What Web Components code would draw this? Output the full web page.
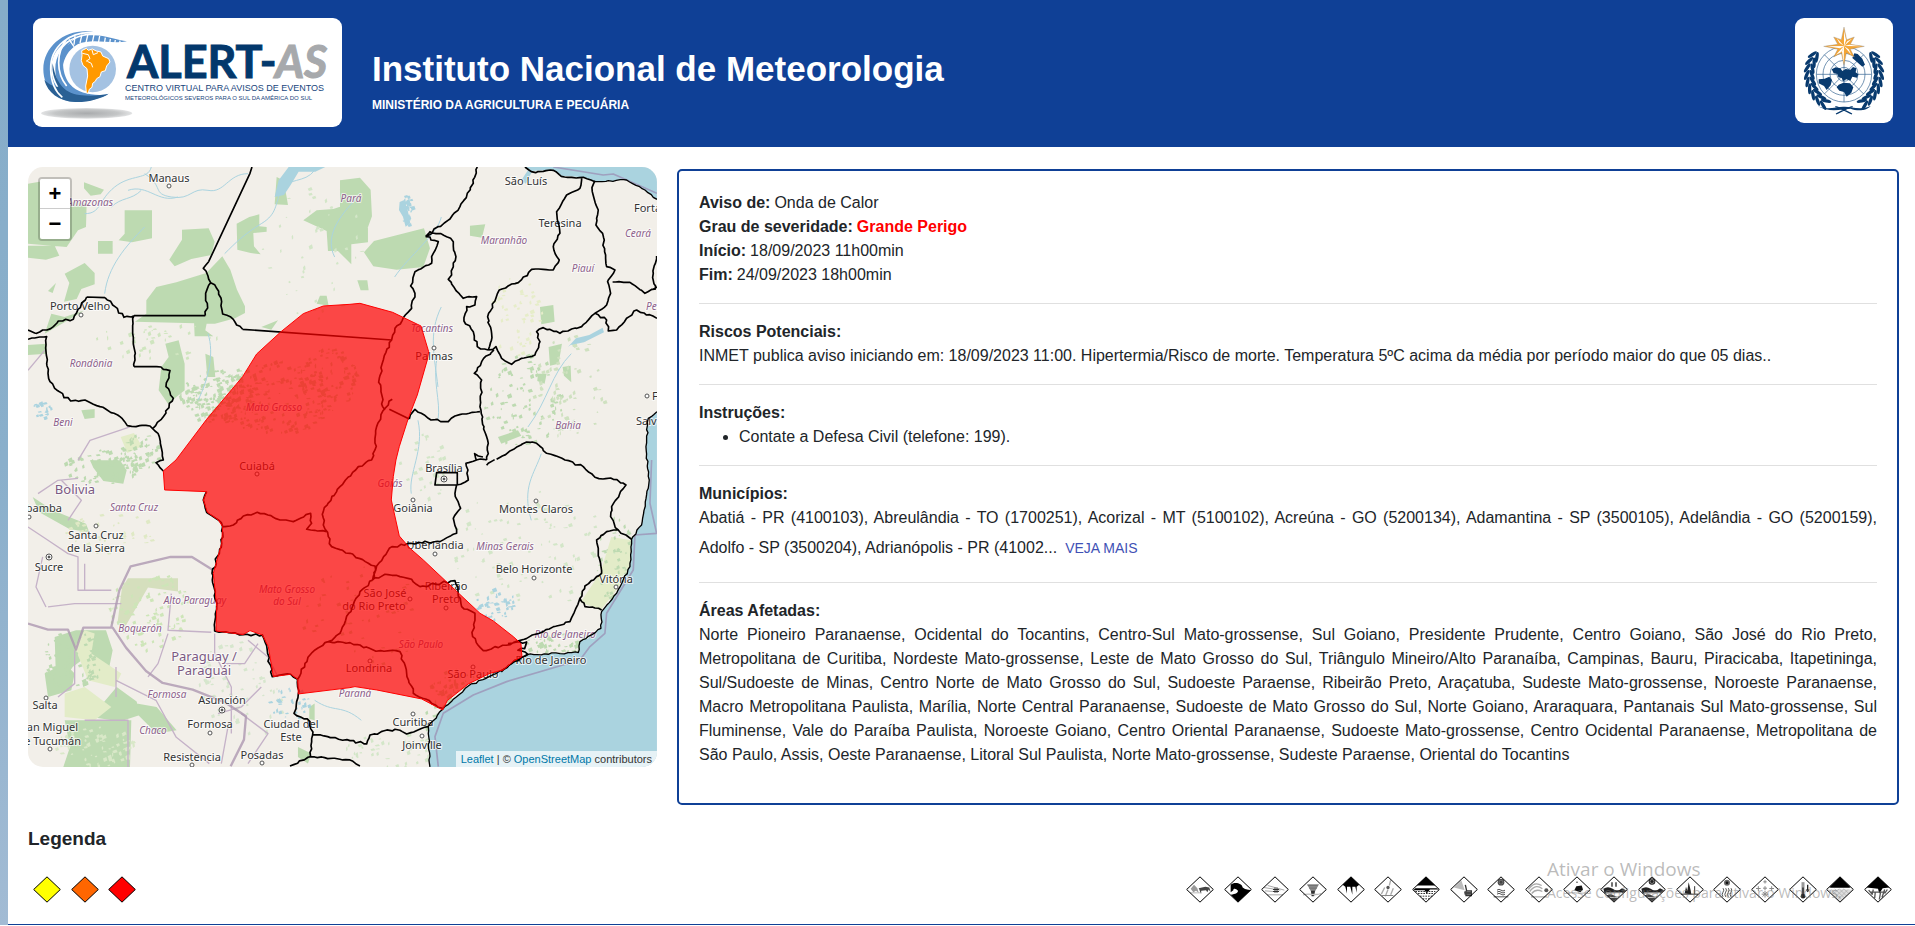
<!DOCTYPE html>
<html lang="pt-BR">
<head>
<meta charset="utf-8">
<meta name="viewport" content="width=device-width, initial-scale=1">
<title>Alert-AS - Instituto Nacional de Meteorologia</title>
<style>
  body { margin: 0; font: 16px/24px "Liberation Sans", Arial, sans-serif; color: #212529; background: #fff; }
</style>
</head>
<body>
<alert-page></alert-page>

<script>
const define = (name, html, setup) => {
  const template = document.createElement('template');
  template.innerHTML = html;
  customElements.define(name, class extends HTMLElement {
    constructor() {
      super();
      this.attachShadow({ mode: 'open' }).append(template.content.cloneNode(true));
    }
    connectedCallback() {
      if (setup && !this.ready) { this.ready = true; setup(this.shadowRoot, this); }
    }
  });
};

/* Small repeatable random source, so that the map is the same on each load. */
const randomFrom = seed => () => {
  seed = (seed * 1664525 + 1013904223) % 4294967296;
  return seed / 4294967296;
};

/* ---------- Logos ---------- */
define('alert-logo', `
<style>
  :host { display: block; width: 309px; height: 109px; background: #fff; border-radius: 9px; }
  svg { display: block; width: 100%; height: 100%; }
  .big { font: bold 45px Lato, sans-serif; fill: #03386c; stroke: #03386c; stroke-width: 1px; }
  .slant { font-style: italic; fill: #a7a9ac; stroke: #a7a9ac; }
  .sub { font: 9px "Liberation Sans", Arial, sans-serif; fill: #17457c; }
  .sub2 { font-size: 6px; }
</style>
<svg viewBox="0 0 309 109" role="img" aria-label="Alert-AS">
  <defs>
    <radialGradient id="sh"><stop offset="0" stop-color="#a9abad"/><stop offset=".7" stop-color="#c4c6c7"/><stop offset="1" stop-color="#e2e3e4"/></radialGradient>
  </defs>
  <g transform="scale(.3333) translate(-99 -54)">
    <ellipse cx="260" cy="340" rx="137" ry="16" fill="url(#sh)"/>
    <path d="M285 97C210 80 130 130 130 208c0 60 45 98 95 97 45 0 80-12 100-22-40 5-90 0-115-30-28-35-30-100 10-135-30 15-55 50-54 90 0 40 20 70 50 84-40-10-62-45-62-88 0-50 38-95 131-107z" fill="#5b92cc"/>
    <path d="M133 240c20 18 35 22 42 20-12-20-20-45-17-70 8 50 30 90 80 95 40 5 70 0 88-4-20 14-60 26-100 25-50-2-83-28-93-66z" fill="#2a6094"/>
    <path d="M381 124c-30-4-70-22-115-18-60 5-85 50-78 95 4-25 15-50 45-68 40-20 100 0 148-9z" fill="#5b92cc"/>
    <g stroke="#fff" stroke-width="4" fill="none">
      <path d="M207 118l15 22M225 108l-3 26M246 103l-6 26M264 102l-6 26M282 104l-5 24M299 108l-4 22M316 113l-3 18M331 117l-2 14M346 120l-2 12M360 122l-1 9"/>
      <path d="M288 99C210 90 150 140 152 208c1 40 15 68 35 84M200 118c-32 40-32 100 0 140" stroke-width="5"/>
    </g>
    <circle cx="278" cy="207" r="73" fill="#fff"/>
    <circle cx="278" cy="207" r="70" fill="#a4c2e2"/>
    <path d="M245 152l14-7 6 6 12-4 12 6 14 3 5 12 18 8 4 10-10 12-4 14-12 4-4 14-10 6-4 8-8 6-2 12-8 6-3 12-6-2-2-20 6-30-2-22-12-10-5-14 2-16z" fill="#f90" stroke="#fff" stroke-width="3"/>
    <path d="M247 160l18 4 5 12-12 8M276 150l4 14 14-6M262 184l12 6 4 12" fill="none" stroke="#fff" stroke-width="3"/>
  </g>
  <text class="big" x="94" y="60">ALERT-</text>
  <text class="big slant" x="242" y="60">AS</text>
  <text class="sub" x="92" y="73">CENTRO VIRTUAL PARA AVISOS DE EVENTOS</text>
  <text class="sub sub2" x="92" y="82">METEOROLÓGICOS SEVEROS PARA O SUL DA AMÉRICA DO SUL</text>
</svg>`);

define('wmo-logo', `
<style>
  :host { display: block; width: 98px; height: 105px; background: #fff; border-radius: 9px; }
  svg { display: block; width: 100%; height: 100%; }
</style>
<svg viewBox="105 54 294 315" role="img" aria-label="WMO">
  <g fill="none" stroke="#2d5f8e" stroke-width="2">
    <circle cx="252" cy="223" r="83"/><circle cx="252" cy="223" r="63"/><circle cx="252" cy="223" r="42"/><circle cx="252" cy="223" r="21"/>
    <path d="M169 223h166M252 140v166M193 164l118 118M311 164L193 282"/>
  </g>
  <g fill="#083a6e">
    <path d="M215 208l12-6 14 3 6 8 10-6 14 2 8-8 10 4-2 12 8 6-4 10-14-3-6 12-12-4-10 6-4-10-10-2-2-10-12-2zM236 254l14-6 20 2 10 12-6 16-14 12-8-14-14-4-8-10zM176 238l18-2 14-6 8 10-4 16-12 14-8-12-16-8zM283 160l10 2 14 14 8 18-8 6-16-14-14-12z"/>
    <g class="wreath"></g>
    <path d="M172 318c30 14 60 1 80 2 20-1 50 12 80-2-10 14-40 16-60 8-25 0-60 14-100-8z"/>
  </g>
  <path d="M228 342c12-5 35-20 50-22M276 342c-12-5-35-20-50-22" fill="none" stroke="#083a6e" stroke-width="4"/>
  <path d="M252 81l8 38 23-8-12 22 42 6-42 9 12 23-24-12-7 37-8-37-23 12 12-23-42-9 42-6-12-22 23 8z" fill="#f3a536" stroke="#8a8a8a" stroke-width="1"/>
  <path d="M252 92v46l6-18zM252 138l52 1-36-5zM252 138l-1 50-5-34zM252 138l-50 1 38 6zM252 138l24-22-14 8zM252 138l22 26-8-16zM252 138l-24 26 16-8zM252 138l-22-24 8 14z" fill="#fff"/>
</svg>`, root => {
  const leaves = [];
  for (let deg = 212; deg >= 124; deg -= 11) {
    const a = deg * Math.PI / 180;
    for (const [r, tilt] of [[96, -22], [112, 24]]) {
      const x = Math.cos(a) * r, y = Math.sin(a) * r;
      const turn = deg + 90 + tilt;
      leaves.push(`<ellipse cx="${252 + x}" cy="${223 + y}" rx="16" ry="5" transform="rotate(${turn} ${252 + x} ${223 + y})"/>`,
        `<ellipse cx="${252 - x}" cy="${223 + y}" rx="16" ry="5" transform="rotate(${-turn} ${252 - x} ${223 + y})"/>`);
    }
  }
  root.querySelector('.wreath').innerHTML = leaves.join('');
});

/* ---------- Header ---------- */
define('site-header', `
<style>
  :host { display: flex; align-items: flex-start; gap: 30px; background: #0f4096; color: #fff; padding: 18px 22px 20px 25px; }
  .names { flex: 1; padding-top: 30px; }
  h1 { margin: 0; font-size: 35px; line-height: 42px; }
  p { margin: 7px 0 0; font-weight: bold; font-size: 12px; line-height: 16px; }
</style>
<alert-logo></alert-logo>
<div class="names"><h1><slot name="title"></slot></h1><p><slot name="subtitle"></slot></p></div>
<wmo-logo></wmo-logo>`);

/* ---------- Map ---------- */
/* Geometry is in thirds of a pixel. */
const BORDERS = [
  '542,284 526,304 548,347 533,379 538,409 532,446',
  '548,347 566,364 581,404 584,441 616,457 626,474 644,487',
  '0,489 26,499 76,479 91,462 136,457 176,390', '231,392 261,419 288,451 318,446',
  '318,446 314,499 321,579 318,599', '386,599 426,611 414,659 436,694 406,749 374,785',
  '0,517 56,509 54,554 66,644 86,669 128,702 171,699 216,719 276,749 298,776 354,775 374,785 394,809 406,879 384,887 406,912',
  '1348,0 1336,49 1296,119 1266,156 1193,209',
  '1193,209 1231,224 1216,259 1211,289 1161,314 1148,357 1161,379 1151,424 1126,452 1101,484 1091,519 1066,579 1054,634 1064,719 1071,729',
  '1193,209 1206,194 1256,209 1276,224 1284,269 1271,324 1261,337 1306,394 1346,389 1341,414 1316,419 1308,462 1336,494 1348,539 1381,549',
  '1661,31 1656,64 1616,84 1586,134 1596,199 1576,239 1594,279 1576,309 1511,307 1471,347 1414,369 1379,449 1391,499 1381,549',
  '1381,549 1404,539 1421,574 1451,592 1481,574 1521,564 1536,524 1526,494 1546,482 1596,499 1661,479 1701,439 1736,414 1748,379 1739,344 1761,309 1736,299 1724,199 1704,174 1711,129 1693,74 1701,41',
  '1754,345 1806,346 1851,379 1887,360', '1886,267 1876,319 1881,369',
  '1701,439 1736,459 1741,492 1766,489 1796,454 1826,429 1887,454',
  '1398,549 1361,584 1339,619 1361,639 1356,719 1368,779 1381,829 1376,879',
  '1376,879 1345,879 1340,860 1365,870',
  '1144,756 1161,727 1201,754 1261,764 1281,747 1356,734',
  '1093,697 1071,724 1046,779 1041,849 1031,879 991,899 936,959 926,974 886,1034 886,1074 901,1109 911,1139 966,1159 1041,1197 1034,1239',
  '581,1079 616,1074 646,1047 688,1036 736,1051 796,1064 848,1039 851,1069 836,1087 896,1094',
  '536,974 526,999 536,1036 571,1059 584,1079 581,1129 552,1219 558,1260 566,1319 560,1392 646,1403 703,1404 719,1460 733,1529 788,1522 809,1537 811,1581 798,1639 846,1664 854,1704 966,1721 1016,1731 1026,1704 1101,1687 1136,1701 1201,1679',
  '854,1704 848,1769 786,1797', '848,1769 966,1779 996,1797',
  '809,1537 831,1489 861,1449 901,1424 936,1399 996,1274 1034,1239',
  '901,1424 966,1427 1036,1449 1116,1454 1136,1519 1156,1579 1244,1624',
  '1034,1239 1046,1197 1084,1144 1141,1129 1236,1124 1286,1099 1276,1054 1298,1024 1281,979 1286,954 1321,939 1314,889 1346,879',
  '1034,1239 1071,1222 1151,1237 1176,1259 1281,1241 1301,1319 1341,1339 1334,1409 1366,1451 1456,1427 1546,1394 1626,1364 1656,1294 1671,1257 1721,1219 1706,1119 1736,1094 1771,1089 1748,1049 1751,1019 1794,954 1756,937 1701,931 1666,899 1611,879 1556,859 1526,829 1496,825 1406,877',
  '1376,895 1400,878', '1771,1089 1811,1117', '1656,1294 1671,1319 1721,1329',
  '1491,0 1510,14 1576,10 1600,28 1666,31 1701,44',
  '1440,1430 1496,1425 1490,1445 1470,1450 1500,1462 1460,1480 1420,1515'
];
const STRAIGHT = 'M672 0l-6 19-124 265M532 446H318M176 390l55 2M318 599h68M644 487l447 32M1084 727l60 29M1221 954l5-37h62v37z';
const COAST = '1887,734 1861,754 1854,839 1864,939 1841,1074 1811,1117 1806,1199 1766,1279 1721,1334 1719,1384 1656,1424 1651,1457 1496,1464 1406,1519 1321,1557 1244,1627 1201,1679 1206,1800';
const NORTH_COAST = '1701,44 1796,39 1851,69 1887,97';
const GREEN = [
  /* Amazonas and Para */
  'M0 50l60-10 40 60 76 10-2 70-24 10-34 50-116-10z', 'M0 236l80 0 14 30-40 12-54-6z', 'M168 46l60 22-10 14-30 4-20-22z', 'M290 130h82v84l-60 12-40-6 18-20z',
  'M210 222h44v38h-44z', 'M462 188l80-4 18 40-10 40-60 12-50 22-16-20 38-60z', 'M626 170l38-20 30-8v36l22 2v14l-40 4 2 40 20 24-30-4-40-10z', 'M746 30l20 10 10 50 4 24-40-2z',
  'M355 440v-40l30-40 60-14 90-28 48-50 24 40 20 60 24 50v20l-30 16-60 16-240-6z', 'M498 460l40 0-6 30 24 18h-56z', 'M400 600l22-30-10-40 40-10 10 40 8 30v80l-50 40-28-40z',
  'M110 320l60-32 30 30v34l-40 14-14 30-38 8 16-56z', 'M70 440l40 10 60-20-50 30-70 40 10-30z', 'M60 372l24-24-10 30z', 'M0 534l56-4v30l-56 4z', 'M826 160l40-30 50-4 60-20 44 40v80l-50 6v60l-40-40h-30l-4-60z', 'M936 40l60-8 32 36 4 80-22 60-74 18z',
  'M866 410l10-24 20 0 6 30z', 'M700 480l50-20-20 28z', 'M1008 256l30-34 150-38 18 60-20 56-80 8-70-10z', 'M988 340l30 0 4 30-24 0z', 'M1326 176l46-4-10 40-36-6z',
  'M1536 420l40-6 4 50-40 8z', 'M1562 540l40-10-10 60-26 6z', 'M1530 620l26 0-6 30-22-8z', 'M1604 600l24-4 2 50-22-20z', 'M1410 810l60-20 10 16-60 24z', 'M160 730l40-4 0 26-30 4z', 'M532 560l24 10 6 60-24 0z',
  /* Bolivia, Chaco and northern Argentina */
  'M186 880h90l20 30-10 40-60-8-30-40z', 'M14 990l60 40 100 40 10 26-60-10-90-50z', 'M80 1410l64-20h90l20 60-20 100-60-80-40 30-20 30-30 10z', 'M50 1520l60-30 30 30-10 50-70 20z', 'M190 1650l76-90 60 44 10 40-60 20z', 'M326 1610l60 10 60 70-60 10-60-60z',
  'M110 1660l90 0 110 0-4 140-200 0 20-60z', 'M844 1620l16-10 0 50-16-4z', 'M810 1740l40 20-10 30-30-20z', 'M560 380l10 14-14 8z'
];
const TAN = ['M300 1234l150 0 0 40-90-12-70 120-22-10 14-110z'];
const PALE = ['M278 810l40-12 24 40-44 20z', 'M140 1440l30-50 30 10-10 60 90 60-20 40-80-20z', 'M110 1580l60-20 80 60-50 40-90-10z', 'M1750 1110l60 10-2 80-50 80-40 50-60-24 60-90z'];
const RIVERS = 'M370 0c-10 40-60 20-110 60s-40 80-90 80M350 20c60 40 20 60 80 70s60-30 110-20 60-50 120-50M300 70c60-20 90 40 150 20M250 120c30-30 60-20 90-50M860 10c-30 40-80 20-100 60s-10 70-60 100-80 60-110 90M990 90c-60 60-100 120-70 180M1100 330c40-60 130-130 140-180M540 500c20 60 0 140-30 200M350 180c-60 60-110 120-120 200M1240 420c-40 80-20 150-10 240M1540 860c-20 60-60 100-30 200M1500 780c60-80 70-160 130-220M1230 560c-20 80 10 140 0 200M1170 760c20 90-30 160-20 220M860 1600c60 40 80 10 140 60';
const INTL = 'M0 1370l60 18h60l24 60 22-66h88l40 60 60 70 50 36 90 20 100 40 60 40-6 70-40 80M250 1380l24-110 34-72 120-28 64 0 64 40';
const PROV = 'M54 1320l-30-60 20-90M0 1080l60 40 60 40 30 10v100l100 0M170 1270v-80M60 1320l80-10 140 0M430 1280l-10 110 130 6M420 1400l-30 90-30 40M560 1400l0 60 50 100 0 140M590 1490l60 0 40-60M700 1560l-60 60-70 20M264 1540l120 60 60 110 100 80M170 1660h130v140M264 1500v90M640 1640l80 60-60 90M600 1680l-20 110M140 1450v100l-50 40M0 610l50-60M306 780l-120 40-36 60M100 940l60 60-40 60M30 980l60-40 60-6M660 1420l60 50 30 60';
const SEALINE = 'M1871 879l-5 130 20 90-65 5-5 105-80 130-5 60-45 40-30 40-220 65-100 40-90 55-25 70 10 90M1576 0l150 24 30-3 131 58';
const WARNING = 'M444 879L536 757 644 629 686 561 758 495 826 440 886 417 966 412 996 409 1094 436 1179 477 1202 554 1198 579 1168 684 1141 754 1114 839 1104 879 1096 929 1090 999 1114 1107 1146 1144 1186 1179 1356 1339 1396 1362 1456 1409 1479 1430 1482 1469 1456 1483 1426 1509 1386 1519 1321 1551 1258 1601 1244 1629 1181 1596 1046 1569 981 1559 966 1562 811 1581 809 1537 788 1522 736 1529 721 1439 703 1404 666 1391 646 1403 564 1392 566 1319 556 1219 581 1129 584 1079 571 1059 538 1036 526 999 536 974 410 969 406 912z';
/* Speckle patches: centre, spread, count, colour. */
const SPECKS = [
  [560, 690, 110, 80, 190, '#bddab1'], [740, 690, 180, 110, 170, '#bddab1'], [900, 640, 90, 100, 90, '#bddab1'], [330, 860, 60, 60, 60, '#bddab1'], [220, 900, 120, 50, 60, '#bddab1'],
  [360, 1330, 120, 120, 90, '#cde5b8'], [250, 1100, 140, 60, 40, '#dfe9c5'], [130, 1480, 90, 90, 90, '#bddab1'], [200, 1740, 120, 60, 80, '#d9e8c8'], [640, 1560, 130, 160, 60, '#d6e6cd'],
  [1480, 700, 120, 140, 90, '#bddab1'], [1620, 660, 110, 160, 70, '#cfe1c0'], [1460, 450, 80, 120, 50, '#e6edc9'], [1500, 1150, 260, 180, 90, '#d3e6c8'], [1760, 1190, 60, 140, 60, '#bddab1'],
  [1240, 1680, 60, 110, 70, '#bddab1'], [1280, 1570, 80, 60, 60, '#bddab1'], [1600, 1430, 120, 30, 60, '#bddab1'], [860, 260, 160, 200, 40, '#d3e6c8'], [1100, 1750, 160, 50, 50, '#d3e6c8'],
  [1000, 1350, 180, 160, 50, '#bddab1'], [400, 520, 200, 60, 40, '#cfe5bf'], [1190, 900, 80, 100, 30, '#d3e6c8'], [1400, 1310, 60, 50, 40, '#aad3df'], [1135, 130, 16, 50, 24, '#aad3df'], [780, 1610, 60, 50, 30, '#aad3df'], [40, 730, 30, 30, 20, '#aad3df']
];
/* Label: x, baseline, text, style, anchor. c city, s state, n country. */
const LABELS = [
  [141,15,'Manaus','c'],[62,39,'Amazonas','s'],[52,143,'Porto Velho','c'],[63,200,'Rondônia','s'],[35,259,'Beni','s'],[246,244,'Mato Grosso','s'],
  [323,35,'Pará','s'],[498,18,'São Luís','c'],[606,45,'Fortaleza','c','start'],[532,60,'Teresina','c'],[610,70,'Ceará','s'],[476,77,'Maranhão','s'],[555,105,'Piauí','s'],
  [618,143,'Pernambuco','s','start'],[404,165,'Tocantins','s'],[406,193,'Palmas','c'],[624,233,'Feira de Santana','c','start'],[608,258,'Salvador','c','start'],[540,262,'Bahia','s'],
  [229,303,'Cuiabá','c'],[47,327,'Bolivia','n'],[106,344,'Santa Cruz','s'],[34,345,'Cochabamba','c','end'],[68,372,'Santa Cruz','c'],[68,385,'de la Sierra','c'],[21,404,'Sucre','c'],
  [259,426,'Mato Grosso','s'],[259,438,'do Sul','s'],[167,437,'Alto Paraguay','s'],[112,465,'Boquerón','s'],[176,494,'Paraguay /','n'],[176,508,'Paraguái','n'],
  [139,531,'Formosa','s'],[194,537,'Asunción','c'],[17,542,'Salta','c'],[182,561,'Formosa','c'],[263,561,'Ciudad del','c'],[263,574,'Este','c'],[125,567,'Chaco','s'],
  [50,564,'San Miguel','c','end'],[53,578,'de Tucumán','c','end'],[164,594,'Resistencia','c'],[234,592,'Posadas','c'],[357,430,'São José','c'],[346,443,'do Rio Preto','c'],
  [418,423,'Ribeirão','c'],[418,436,'Preto','c'],[416,305,'Brasília','c'],[362,320,'Goiás','s'],[385,345,'Goiânia','c'],[508,346,'Montes Claros','c'],[477,383,'Minas Gerais','s'],
  [407,382,'Uberlândia','c'],[506,406,'Belo Horizonte','c'],[588,416,'Vitória','c'],[537,471,'Rio de Janeiro','s'],[523,497,'Rio de Janeiro','c'],[393,481,'São Paulo','s'],
  [445,511,'São Paulo','c'],[341,505,'Londrina','c'],[327,530,'Paraná','s'],[385,559,'Curitiba','c'],[394,582,'Joinville','c']
];
const DOTS = [[141,19],[53,148],[406,181],[619,229],[229,307],[68,359],[1,350],[18,531],[182,566],[164,598],[234,596],[22,582],[382,432],[418,441],[385,333],[508,334],[407,387],[506,411],[588,420],[445,500],[342,494],[385,547],[394,569]];
const CAPITALS = [[21,390],[194,543],[416,312]];

define('warning-map', `
<style>
  :host { display: block; position: relative; height: 600px; border-radius: 15px; overflow: hidden; background: #f2efe9; }
  svg { display: block; width: 100%; height: 100%; }
  text { paint-order: stroke; stroke: #fff; stroke-opacity: .7; stroke-width: 2px; stroke-linejoin: round; text-anchor: middle; font-family: "Noto Sans", sans-serif; }
  .c { font-size: 11px; fill: #333; }
  .s { font-size: 10px; font-style: italic; fill: #8d618b; }
  .n { font-size: 13px; fill: #7c5a83; }
  .start { text-anchor: start; }
  .end { text-anchor: end; }
  .zoom { position: absolute; left: 10px; top: 10px; display: flex; flex-direction: column; border: 2px solid rgba(0,0,0,.2); border-radius: 4px; background-clip: padding-box; }
  button { width: 30px; height: 30px; box-sizing: border-box; padding: 0; border: 0; background: #fff; color: #000; font: bold 22px/28px "Liberation Sans", Arial, sans-serif; cursor: pointer; border-radius: 0 0 2px 2px; }
  button:first-child { border-bottom: 1px solid #ccc; border-radius: 2px 2px 0 0; }
  .credit { position: absolute; right: 0; bottom: 0; padding: 0 5px; background: rgba(255,255,255,.7); color: #333; font-size: 11px; line-height: 16px; white-space: nowrap; }
  a { color: #0078a8; text-decoration: none; }
</style>
<svg viewBox="0 0 629 600" preserveAspectRatio="xMidYMid slice" role="img" aria-label="Mapa da área de aviso"></svg>
<div class="zoom"><button type="button" aria-label="Aproximar">+</button><button type="button" aria-label="Afastar">−</button></div>
<div class="credit"><a href="#leaflet">Leaflet</a> | © <a href="#osm">OpenStreetMap</a> contributors</div>`,
root => {
  const rnd = randomFrom(7);
  const rough = (list, size = 7) => {
    const p = list.split(' ').map(s => s.split(',').map(Number));
    const out = [p[0]];
    for (let i = 1; i < p.length; i++) {
      const [x0, y0] = p[i - 1], [x1, y1] = p[i];
      const n = Math.max(1, Math.round(Math.hypot(x1 - x0, y1 - y0) / 11));
      for (let k = 1; k < n; k++) {
        out.push([Math.round(x0 + (x1 - x0) * k / n + (rnd() - .5) * size), Math.round(y0 + (y1 - y0) * k / n + (rnd() - .5) * size)]);
      }
      out.push(p[i]);
    }
    return out.map(q => q.join(' ')).join('L');
  };
  const coast = rough(COAST, 5), north = rough(NORTH_COAST, 4);
  const borders = BORDERS.map(b => 'M' + rough(b)).join('');
  const specks = SPECKS.map(([cx, cy, rx, ry, n, colour]) => {
    let d = '';
    for (let i = 0; i < n; i++) {
      const a = rnd() * 6.28, r = Math.sqrt(rnd());
      const w = 3 + rnd() * 9, h = 3 + rnd() * 9;
      d += `M${Math.round(cx + Math.cos(a) * rx * r)} ${Math.round(cy + Math.sin(a) * ry * r)}l${w.toFixed(0)} ${(-h / 2).toFixed(0)} ${(w / 3).toFixed(0)} ${h.toFixed(0)} ${(-w).toFixed(0)} ${(h / 3).toFixed(0)}z`;
    }
    return `<path d="${d}" fill="${colour}"/>`;
  }).join('');
  root.querySelector('svg').innerHTML = `
    <g transform="scale(.3333)" fill="none" stroke-linejoin="round">
      <path d="${GREEN.join('')}" fill="#bddab1"/>
      <path d="${TAN.join('')}" fill="#d5dfbd"/>
      <path d="${PALE.join('')}" fill="#e3ecc8"/>
      ${specks}
      <path d="${RIVERS}" stroke="#aad3df" stroke-width="3"/>
      <path d="M1115 105l14-6 10 30 8 40-14 10-8-30-12-20zM740 90l12-50 30-40h110l-30 14-50 0-24 40-20 30zM1620 540l24-26 40-10 40-22 4 14-60 30-40 8zM1480 40l20-30 14 0-20 40z" fill="#aad3df"/>
      <path d="M${coast}L1887 1800z" fill="#aad3df"/>
      <path d="M1491 0L1510 12 1576 8 1600 26 1666 31 ${north.replace(/L/g, ' ')} 1887 0z" fill="#aad3df"/>
      <path d="${PROV}" stroke="#c5b2c8" stroke-width="4"/>
      <path d="${INTL}" stroke="#ad97b0" stroke-width="7" stroke-opacity=".8"/>
      <path d="${SEALINE}" stroke="#9a8ab0" stroke-width="5" stroke-opacity=".7"/>
    </g>
    <g fill="#fff" stroke="#555">${DOTS.map(([x, y]) => `<circle cx="${x}" cy="${y}" r="2"/>`).join('')}
      ${CAPITALS.map(([x, y]) => `<circle cx="${x}" cy="${y}" r="3"/><circle cx="${x}" cy="${y}" r="1" fill="#333"/>`).join('')}</g>
    ${LABELS.map(([x, y, t, k, anchor = '']) => `<text x="${x}" y="${y}" class="${k} ${anchor}">${t}</text>`).join('')}
    <g transform="scale(.3333)" fill="none" stroke-linejoin="round">
      <path d="${borders}${STRAIGHT}" stroke="#000" stroke-width="5"/>
      <path d="M${coast}M${north}" stroke="#000" stroke-width="4"/>
      <path d="${WARNING}" fill="#f00" fill-opacity=".7" stroke="#f00" stroke-width="3"/>
    </g>`;
});

/* ---------- Warning details ---------- */
define('info-section', `
<style>
  :host { display: block; }
  :host(:not([first])) { border-top: 1px solid #e0e0e0; margin-top: 16px; padding-top: 16px; }
  h2 { margin: 0; font-size: 16px; line-height: 24px; }
</style>
<h2><slot name="heading"></slot></h2><slot></slot>`);

define('warning-panel', `
<style>
  :host { display: block; border: 2px solid #0f4096; border-radius: 5px; padding: 20px 20px 36px; text-align: justify; }
  p, dl, dd, ul { margin: 0; }
  dl div { display: flex; gap: 4px; }
  dt, .level { font-weight: bold; }
  .level { color: #f00; }
  ul { padding-left: 40px; }
  button { border: 0; background: none; padding: 6px 8px; color: #3f51b5; font: 14px/24px "Liberation Sans", Arial, sans-serif; cursor: pointer; }
</style>
<info-section first>
  <dl>
    <div><dt>Aviso de:</dt><dd>Onda de Calor</dd></div>
    <div><dt>Grau de severidade:</dt><dd class="level">Grande Perigo</dd></div>
    <div><dt>Início:</dt><dd>18/09/2023 11h00min</dd></div>
    <div><dt>Fim:</dt><dd>24/09/2023 18h00min</dd></div>
  </dl>
</info-section>
<info-section><span slot="heading">Riscos Potenciais:</span>
  <p>INMET publica aviso iniciando em: 18/09/2023 11:00. Hipertermia/Risco de morte. Temperatura 5ºC acima da média por período maior do que 05 dias..</p>
</info-section>
<info-section><span slot="heading">Instruções:</span>
  <ul><li>Contate a Defesa Civil (telefone: 199).</li></ul>
</info-section>
<info-section><span slot="heading">Municípios:</span>
  <p>Abatiá - PR (4100103), Abreulândia - TO (1700251), Acorizal - MT (5100102), Acreúna - GO (5200134), Adamantina - SP (3500105), Adelândia - GO (5200159), Adolfo - SP (3500204), Adrianópolis - PR (41002...<button type="button">VEJA MAIS</button></p>
</info-section>
<info-section><span slot="heading">Áreas Afetadas:</span>
  <p>Norte Pioneiro Paranaense, Ocidental do Tocantins, Centro-Sul Mato-grossense, Sul Goiano, Presidente Prudente, Centro Goiano, São José do Rio Preto, Metropolitana de Curitiba, Nordeste Mato-grossense, Leste de Mato Grosso do Sul, Triângulo Mineiro/Alto Paranaíba, Campinas, Bauru, Piracicaba, Itapetininga, Sul/Sudoeste de Minas, Centro Norte de Mato Grosso do Sul, Sudoeste Paraense, Ribeirão Preto, Araçatuba, Sudeste Mato-grossense, Noroeste Paranaense, Macro Metropolitana Paulista, Marília, Norte Central Paranaense, Sudoeste de Mato Grosso do Sul, Norte Goiano, Araraquara, Pantanais Sul Mato-grossense, Sul Fluminense, Vale do Paraíba Paulista, Noroeste Goiano, Centro Oriental Paranaense, Sudoeste Mato-grossense, Centro Ocidental Paranaense, Metropolitana de São Paulo, Assis, Oeste Paranaense, Litoral Sul Paulista, Norte Mato-grossense, Sudeste Paraense, Oriental do Tocantins</p>
</info-section>`);

/* ---------- Legend ---------- */
/* Drawings inside the diamond, on an 84 by 80 field. */
const HAZARDS = {
  seca: '<path d="M14 38l10-12 10 10 4 14-8-6-8 4z" fill="#999"/><path d="M38 36l20-4 12 2 4 14-6-8-4 8-4-6-14 2-2 8-4-12z" fill="#444"/><path d="M12 50h36" stroke="#999" stroke-width="2"/>',
  ressaca: '<path d="M20 26c10-10 34-6 36 8 10 8 18 6 24 8L42 78 20 56c16-2 22-6 22-12-6-8-14-8-14-2l-8 6z" fill="#000"/>',
  vento: '<path d="M8 34l50 8M12 44l26 2M20 28l50 14M18 56h48" stroke="#aaa" stroke-width="3"/><path d="M42 34v16M48 34v16M36 40h18M36 46h18" stroke="#333" stroke-width="3"/>',
  tornado: '<path d="M24 24h36L48 46l-2 14-8-2-2-12z" fill="#888"/><path d="M26 28h30M30 36h24" stroke="#666" stroke-width="2"/><path d="M36 44h12l-4 16h-6z" fill="#333"/><path d="M12 56c20-6 40 4 54-4" stroke="#bbb" stroke-width="4" fill="none"/>',
  tempestade: '<path d="M42 2l25 24-8 6v18l-4-18H46v24l-6-24H30v20l-5-20-8-6z" fill="#000"/>',
  granizo: '<circle cx="42" cy="34" r="5" fill="#555"/><path d="M46 28l4-16M22 54l10-20M34 60l8-20M50 56l8-20" stroke="#aaa" stroke-width="4"/><path d="M24 58h34" stroke="#888" stroke-width="3"/>',
  raios: '<path d="M42 2l28 26H14zM10 36h64l8 4H54l-10 12-6-10H4z" fill="#000"/><path d="M10 46h60M18 52h50M24 60h38M32 68h22" stroke="#333" stroke-width="3" stroke-dasharray="5 3"/>',
  deslizamento: '<path d="M12 34l22-22 10 30z" fill="#bbb"/><path d="M46 26l4 18h14v14H48v-14" fill="none" stroke="#333" stroke-width="4"/><path d="M42 46h24l-4 10H44z" fill="#444"/>',
  umidade: '<circle cx="42" cy="18" r="10" fill="#444"/><circle cx="42" cy="18" r="6" fill="none" stroke="#ccc"/><path d="M30 42q6-5 12 0t12 0M30 48q6-5 12 0t12 0M30 54q6-5 12 0t12 0M20 62h44" stroke="#555" stroke-width="3" fill="none"/>',
  vendaval: '<path d="M10 40c14-20 26-20 40-12M14 46c14-18 26-18 38-8M20 52c10-12 20-12 32-6M18 62h48" stroke="#aaa" stroke-width="4" fill="none"/><circle cx="64" cy="42" r="6" fill="#555"/>',
  fumaca: '<path d="M34 42l6-12 16-2 4 12-8 8z" fill="#111"/><path d="M14 52c14-6 30 2 54-2" stroke="#aaa" stroke-width="3" fill="none"/><circle cx="42" cy="18" r="2"/>',
  enchente: '<path d="M36 18v14M48 18v14" stroke="#555" stroke-width="5"/><path d="M10 38q14-10 28 0t28-2l12 6-8 8-56 2z" fill="#222"/><path d="M20 58q10-8 22 0t22-2L42 76z" fill="#444"/><path d="M18 50h48M30 64h24" stroke="#bbb" stroke-width="3"/>',
  inundacao: '<circle cx="42" cy="16" r="10" fill="#222"/><circle cx="42" cy="16" r="6" fill="none" stroke="#aaa" stroke-width="2"/><path d="M10 38q14-10 28 0t28-2l12 6-8 8-56 2z" fill="#222"/><path d="M20 58q10-8 22 0t22-2L42 76z" fill="#444"/><path d="M18 50h48M30 64h24" stroke="#bbb" stroke-width="3"/>',
  incendio: '<path d="M26 52l4-20 4 12 4-26 6 24 2 12z" fill="#222"/><path d="M14 54h52M56 54V30" stroke="#333" stroke-width="3"/>',
  calor: '<circle cx="42" cy="20" r="9" fill="#666"/><circle cx="42" cy="20" r="4" fill="#111"/><path d="M30 36q5 6 0 12t0 14M38 36q5 6 0 12t0 14M46 36q5 6 0 12t0 14M54 36q5 6 0 12t0 14" stroke="#555" stroke-width="3" fill="none"/>',
  neve: '<path d="M42 12v10M37 17h10M22 30v14M15 37h14M62 30v14M55 37h14M42 44v20M32 54h20M35 47l14 14M49 47L35 61M36 36h12M42 30v12" stroke="#888" stroke-width="3"/>',
  frio: '<path d="M42 18v40" stroke="#999" stroke-width="9"/><path d="M42 34v24M56 26v20" stroke="#222" stroke-width="4"/><circle cx="42" cy="60" r="7" fill="#222"/><path d="M50 40h12l-6 8z" fill="#222"/>',
  chuva: '<path d="M42 2l32 31-4 2H14l-4-2z" fill="#000"/><path d="M4 40h76L42 78z" fill="#ddd"/><path d="M16 40l30 30M26 38l28 26M40 38l22 22M54 38l14 14M66 40L36 70M54 38L28 62M40 38L20 54" stroke="#aaa" stroke-width="2"/>',
  temporal: '<path d="M42 2l34 32-20 2-10 16-4-14-34-4z" fill="#000"/><path d="M14 42l10 12M28 40l-4 16M34 46l-2 20M50 46l-4 24M62 40l-8 24M70 40l-8 12M20 48h44" stroke="#555" stroke-width="4"/>'
};
define('hazard-icon', `
<style>
  :host { display: block; flex: none; width: 28px; height: 27px; }
  svg { display: block; width: 100%; height: 100%; }
</style>
<svg viewBox="0 0 84 80"><path class="base" d="M42 2l40 38-40 38L2 40z"/><g></g><path d="M42 2l40 38-40 38L2 40z" fill="none" stroke="#000" stroke-width="3"/></svg>`,
(root, host) => {
  root.querySelector('.base').setAttribute('fill', host.getAttribute('color') || '#fff');
  root.querySelector('g').innerHTML = HAZARDS[host.getAttribute('kind')] || '';
});

define('legend-bar', `
<style>
  :host { display: block; padding: 22px 0 21px; }
  h2 { margin: 0; font-size: 19px; line-height: 24px; }
  .row { display: flex; justify-content: space-between; padding: 25px 7px 0 5px; }
  .set { display: flex; justify-content: space-between; }
  .levels { flex: 0 1 103px; }
  .kinds { flex: 0 1 706px; }
</style>
<h2>Legenda</h2>
<div class="row">
  <div class="set levels"><hazard-icon color="#ff0"></hazard-icon><hazard-icon color="#f60"></hazard-icon><hazard-icon color="#f00"></hazard-icon></div>
  <div class="set kinds"></div>
</div>`, root => {
  root.querySelector('.kinds').innerHTML = Object.keys(HAZARDS).map(k => `<hazard-icon kind="${k}"></hazard-icon>`).join('');
});

/* System notice that floats over the corner of the screen. */
define('activation-notice', `
<style>
  :host { position: absolute; right: 70px; bottom: 22px; width: 298px; color: rgba(120,120,120,.5); font-family: "Open Sans", "Noto Sans", sans-serif; white-space: nowrap; pointer-events: none; }
  p { margin: 0; font-size: 19px; line-height: 24px; }
  p + p { margin-top: 2px; font-size: 14px; line-height: 20px; }
</style>
<p>Ativar o Windows</p><p>Acesse Configurações para ativar o Windows.</p>`);

define('alert-page', `
<style>
  :host { display: block; position: relative; padding-left: 8px; background: linear-gradient(#86adc9, #8aafcb 50%, #a2bbd4) left / 8px 100% no-repeat; }
  main { padding: 20px 16px 0 20px; }
  .detail { display: grid; grid-template-columns: 629fr 1222fr; gap: 20px; align-items: start; }
  warning-panel { margin-top: 2px; }
  footer { border-top: 1px solid #0f4096; }
</style>
<site-header><span slot="title">Instituto Nacional de Meteorologia</span><span slot="subtitle">MINISTÉRIO DA AGRICULTURA E PECUÁRIA</span></site-header>
<main>
  <div class="detail"><warning-map></warning-map><warning-panel></warning-panel></div>
  <legend-bar></legend-bar>
</main>
<footer></footer>
<activation-notice></activation-notice>`);
</script>
</body>
</html>
